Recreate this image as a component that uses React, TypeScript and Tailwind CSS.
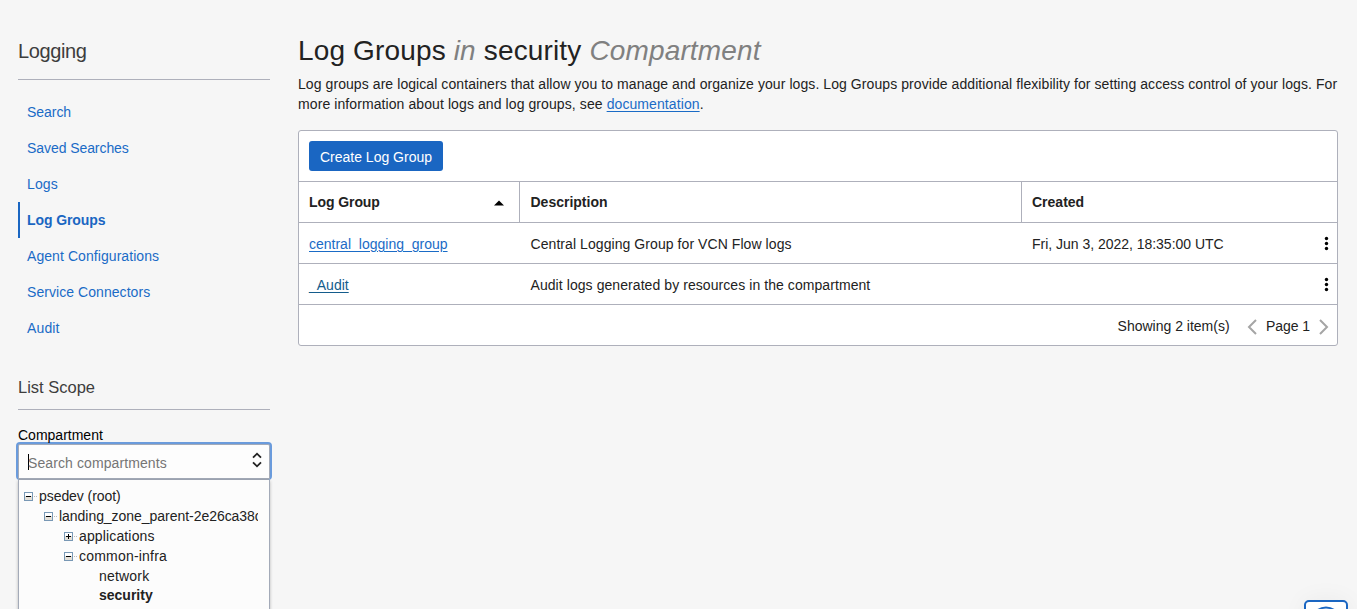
import type { ReactNode } from "react";

const navItems = [
  { label: "Search", tracking: "tracking-[-0.04px]" },
  { label: "Saved Searches", tracking: "tracking-[-0.07px]" },
  { label: "Logs", tracking: "tracking-[0.1px]" },
  { label: "Log Groups", tracking: "tracking-[-0.1px]", active: true },
  { label: "Agent Configurations", tracking: "tracking-[0.07px]" },
  { label: "Service Connectors", tracking: "tracking-[0.06px]" },
  { label: "Audit", tracking: "tracking-[0.15px]" },
];

const rows = [
  {
    name: "central_logging_group",
    tone: "text-[#1a6bc6]",
    description: "Central Logging Group for VCN Flow logs",
    created: "Fri, Jun 3, 2022, 18:35:00 UTC",
  },
  {
    name: "_Audit",
    tone: "text-[#145c8c]",
    description: "Audit logs generated by resources in the compartment",
    created: "",
  },
];

function Toggle({ open }: { open: boolean }) {
  return (
    <svg width="15" height="9" viewBox="0 0 15 9" className="shrink-0" shapeRendering="crispEdges">
      <rect x="0.5" y="0.5" width="8" height="8" fill="#e4e0d8" stroke="#7898b5" />
      <rect x="1" y="1" width="7" height="3" fill="#ffffff" />
      <path d={open ? "M2 4.5h5" : "M2 4.5h5M4.5 2v5"} stroke="#000" />
      <path d="M10 4.5h1M12 4.5h1" stroke="#bbb" />
    </svg>
  );
}

function TreeRow({ indent, open, children }: { indent: string; open?: boolean; children: ReactNode }) {
  return (
    <li className={`flex h-5 items-center overflow-hidden whitespace-nowrap ${indent}`}>
      {open !== undefined && <Toggle open={open} />}
      <span>{children}</span>
    </li>
  );
}

function Sidebar() {
  return (
    <aside className="w-[252px] shrink-0">
      <h2 className="flex h-20 items-center border-b border-[#aeb0bb] pt-[22px] text-[20px] tracking-[-0.4px] text-[#3d3d3d]">
        Logging
      </h2>
      <nav className="mt-3.5 flex flex-col">
        {navItems.map((item) => (
          <a
            key={item.label}
            className={`flex h-9 items-center ${item.tracking} ${
              item.active
                ? "border-l-2 border-[#1a66c2] pl-[7px] font-bold text-[#1a66c2]"
                : "pl-[9px] text-[#1a6bc6]"
            }`}
          >
            {item.label}
          </a>
        ))}
      </nav>
      <h3 className="mt-5 flex h-11 items-center border-b border-[#aeb0bb] pb-0.5 text-[16.5px] text-[#3d3d3d]">
        List Scope
      </h3>
      <div className="mt-4 h-4 leading-[19px] text-black">
        <span className="relative z-10">Compartment</span>
      </div>
      <div className="-mx-0.5 rounded-[4px] bg-[#6a9bdc] p-0.5 pb-0">
        <div className="flex h-[36px] items-center justify-between rounded-[2px] border border-b-2 border-[#a3aab8] bg-[#fdfdfd] pl-[9px] pr-[7px] text-[#757575]">
          <span className="flex items-center">
            <span className="h-4 w-px bg-black" />
            <span className="-ml-px mt-[2px] tracking-[0.1px]">Search compartments</span>
          </span>
          <svg width="10" height="16" viewBox="0 0 10 16" fill="none" stroke="#222" strokeWidth="1.8" className="-mt-[3px]">
            <path d="M1 5.7 5 1.7l4 4M1 10.3l4 4 4-4" />
          </svg>
        </div>
      </div>
      <ul className="relative h-[160px] border border-t-0 border-[#a3aab8] bg-[#fcfcfc] pl-[5px] pr-[11px] pt-[6px] shadow-[0_1px_3px_rgba(0,0,0,0.25)]">
        <TreeRow indent="pl-0" open><span className="tracking-[-0.06px]">psedev (root)</span></TreeRow>
        <TreeRow indent="pl-5" open><span className="tracking-[-0.04px]">landing_zone_parent-2e26ca38c</span></TreeRow>
        <TreeRow indent="pl-10" open={false}><span className="tracking-[0.14px]">applications</span></TreeRow>
        <TreeRow indent="pl-10" open><span className="tracking-[0.2px]">common-infra</span></TreeRow>
        <TreeRow indent="pl-[75px]"><span className="tracking-[0.2px]">network</span></TreeRow>
        <TreeRow indent="pl-[75px]"><b className="relative -top-px">security</b></TreeRow>
      </ul>
    </aside>
  );
}

function Kebab() {
  return (
    <svg width="5" height="15" viewBox="0 0 5 15" fill="#000">
      <circle cx="2.5" cy="2.5" r="1.7" />
      <circle cx="2.5" cy="7.5" r="1.7" />
      <circle cx="2.5" cy="12.5" r="1.7" />
    </svg>
  );
}

function LogGroupTable() {
  return (
    <section className="mt-4 rounded-[3px] border border-[#aeb0bb] bg-white">
      <div className="flex h-[51px] items-center border-b border-[#aeb0bb] pl-2.5">
        <button className="h-[30px] w-[134px] rounded-[3px] bg-[#1a66c2] pt-0.5 text-white">
          Create Log Group
        </button>
      </div>
      <div className="grid h-[41px] grid-cols-[221px_502px_1fr] border-b border-[#aeb0bb] font-bold">
        <div className="flex items-center justify-between border-r border-[#aeb0bb] pl-2.5 pr-[15px] tracking-[-0.08px]">
          Log Group
          <svg width="10" height="6" viewBox="0 0 10 6" className="mt-0.5"><path d="M0 5.5 5 .5l5 5z" /></svg>
        </div>
        <div className="flex items-center border-r border-[#aeb0bb] pl-[10.5px]">Description</div>
        <div className="flex items-center pl-2.5">Created</div>
      </div>
      {rows.map((row) => (
        <div key={row.name} className="grid h-[41px] grid-cols-[221px_502px_1fr] items-center border-b border-[#aeb0bb]">
          <div className="pl-2.5 pt-0.5">
            <a className={`underline underline-offset-2 ${row.tone}`}>{row.name}</a>
          </div>
          <div className="pl-[10.5px] pt-0.5 tracking-[0.07px]">{row.description}</div>
          <div className="flex items-center justify-between pl-2.5 pr-2">
            <span className="pt-0.5 tracking-[-0.02px]">{row.created}</span>
            <span className="pt-px"><Kebab /></span>
          </div>
        </div>
      ))}
      <div className="flex h-[40px] items-center justify-end pr-2">
        <span className="pt-0.5">Showing 2 item(s)</span>
        <svg width="10" height="16" viewBox="0 0 10 16" fill="none" stroke="#a5a5a5" strokeWidth="2" className="ml-[17.5px] mt-1">
          <path d="M9 1 2 8l7 7" />
        </svg>
        <span className="ml-[9px] pt-0.5 tracking-[-0.08px]">Page 1</span>
        <svg width="10" height="16" viewBox="0 0 10 16" fill="none" stroke="#a5a5a5" strokeWidth="2" className="ml-[9px] mt-1">
          <path d="m1 1 7 7-7 7" />
        </svg>
      </div>
    </section>
  );
}

export default function App() {
  return (
    <div className="relative flex h-[609px] w-[1357px] gap-7 overflow-hidden bg-[#f6f6f6] pl-[18px] font-['Liberation_Sans',Arial,sans-serif] text-[14px] leading-5 text-[#222]">
      <Sidebar />
      <main className="w-[1040px] shrink-0">
        <h1 className="mt-[30px] h-11 whitespace-nowrap text-[28px] leading-[42px] tracking-[0.15px]">
          Log Groups <em className="text-[#808080]">in</em> security <em className="text-[#808080]">Compartment</em>
        </h1>
        <p className="whitespace-nowrap">
          <span className="tracking-[0.075px]">
            Log groups are logical containers that allow you to manage and organize your logs. Log Groups provide additional flexibility for setting access control of your logs. For
          </span>
          <br />
          <span className="tracking-[0.09px]">
            more information about logs and log groups, see{" "}
            <a className="text-[#1a6bc6] underline underline-offset-2">documentation</a>.
          </span>
        </p>
        <LogGroupTable />
      </main>
      <div className="absolute left-[1304px] top-[600px] h-11 w-11 rounded-[5px] border-2 border-[#1a66c2] bg-white shadow-[0_0_24px_rgba(0,0,0,0.05)]">
        <svg width="40" height="40" viewBox="0 0 40 40" fill="none" stroke="#1a66c2" strokeWidth="2">
          <circle cx="20" cy="20" r="14.5" />
        </svg>
      </div>
    </div>
  );
}
